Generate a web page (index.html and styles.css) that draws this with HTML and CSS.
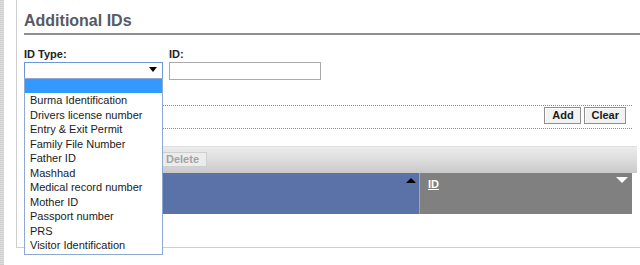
FILE: index.html
```html
<!DOCTYPE html>
<html>
<head>
<meta charset="utf-8">
<link rel="stylesheet" href="styles.css">
</head>
<body>
<div class="page">
  <div class="strip"></div>
  <div class="panel">
    <h2 class="title">Additional IDs</h2>
    <div class="form">
      <div class="fields">
        <div class="field field-type">
          <label class="label">ID Type:</label>
          <div class="select"><span class="select-arrow"></span></div>
          <ul class="dropdown">
            <li class="opt selected">&nbsp;</li>
            <li class="opt">Burma Identification</li>
            <li class="opt">Drivers license number</li>
            <li class="opt">Entry &amp; Exit Permit</li>
            <li class="opt">Family File Number</li>
            <li class="opt">Father ID</li>
            <li class="opt">Mashhad</li>
            <li class="opt">Medical record number</li>
            <li class="opt">Mother ID</li>
            <li class="opt">Passport number</li>
            <li class="opt">PRS</li>
            <li class="opt">Visitor Identification</li>
          </ul>
        </div>
        <div class="field">
          <label class="label">ID:</label>
          <input class="text" type="text">
        </div>
      </div>
      <div class="actions">
        <button class="btn">Add</button>
        <button class="btn">Clear</button>
      </div>
      <div class="toolbar">
        <button class="btn btn-disabled">Delete</button>
      </div>
      <div class="grid-head">
        <div class="col col-type"><span class="tri-up"></span></div>
        <div class="col col-id"><span class="col-label">ID</span><span class="tri-down"></span></div>
      </div>
    </div>
  </div>
</div>
</body>
</html>
```

FILE: styles.css
```css
* { box-sizing: border-box; }
html, body { margin: 0; padding: 0; background: #fff; }
body {
  font-family: "Liberation Sans", Arial, sans-serif;
  color: #222;
  width: 640px;
  height: 265px;
  overflow: hidden;
}
.page { display: flex; height: 265px; }
.strip {
  width: 4px;
  flex: none;
  background: repeating-linear-gradient(to bottom, #cfcfcf 0, #cfcfcf 1px, #dedede 1px, #dedede 2px);
}
.panel {
  margin-left: 12px;
  flex: 1;
  height: 248px;
  border-left: 1px solid #cfcfcf;
  border-bottom: 1px solid #cfcfcf;
  padding-left: 7px;
}
.title {
  margin: 11px 0 0 0;
  font-size: 16px;
  line-height: 20px;
  font-weight: bold;
  color: #555a66;
  padding-bottom: 2px;
  border-bottom: 2px solid #8f8f8f;
}
.form { width: 608px; }
.fields { display: flex; margin-top: 13px; }
.field { display: flex; flex-direction: column; }
.field-type { width: 145px; position: relative; }
.label {
  font-size: 11px;
  line-height: 13px;
  font-weight: bold;
  color: #222;
}
.select {
  margin-top: 1px;
  width: 139px;
  height: 17px;
  border: 1px solid #6d97d6;
  background: #fff;
  display: flex;
  justify-content: flex-end;
  align-items: flex-start;
  padding: 4px 5px 0 0;
}
.select-arrow {
  width: 0; height: 0;
  border-left: 4px solid transparent;
  border-right: 4px solid transparent;
  border-top: 5px solid #000;
}
.dropdown {
  position: absolute;
  left: 0;
  top: 30px;
  width: 139px;
  margin: 0;
  padding: 0 0 1px 0;
  list-style: none;
  background: #fff;
  border: 1px solid #8ea8d4;
  z-index: 5;
}
.opt {
  height: 14.5px;
  line-height: 14.5px;
  font-size: 11px;
  padding-left: 5px;
  color: #1a1a1a;
  white-space: nowrap;
}
.opt.selected { background: #3399ff; height: 14px; }
.text {
  margin: 1px 0 0 0;
  width: 152px;
  height: 18px;
  border: 1px solid #aaaaaa;
  padding: 0 2px;
  font-size: 11px;
}
.actions {
  margin-top: 25px;
  height: 24px;
  border-top: 1px dotted #8a8a8a;
  border-bottom: 1px dotted #8a8a8a;
  display: flex;
  justify-content: flex-end;
  align-items: flex-start;
  gap: 3px;
  padding: 1px 6px 0 0;
}
.btn {
  font-family: "Liberation Sans", Arial, sans-serif;
  font-size: 11px;
  font-weight: bold;
  color: #1a1a1a;
  height: 17px;
  line-height: 15px;
  padding: 0 6px;
  min-width: 37px;
  background: #f2f2f2;
  border: 1px solid #8f8f8f;
  box-shadow: inset 1px 1px 0 #fff;
  border-radius: 0;
  margin: 0;
}
.toolbar {
  margin-top: 17px;
  height: 27px;
  width: 613px;
  background: linear-gradient(to bottom, #ececec 0%, #dedede 45%, #c9c9c9 100%);
  border-top: 1px solid #e2e2e2;
  padding: 5px 0 0 134px;
  display: flex;
  align-items: flex-start;
}
.btn-disabled {
  color: #a3a3a3;
  height: 15px;
  line-height: 13px;
  min-width: 0;
  padding: 0 7px;
  background: #ececec;
  border: 1px solid #cfcfcf;
  box-shadow: none;
}
.grid-head { display: flex; height: 41px; }
.col { height: 41px; }
.col-type {
  width: 396px;
  background: #5b72a8;
  border-right: 1px solid #9aa6c0;
  display: flex;
  justify-content: flex-end;
  align-items: flex-start;
  padding: 5px 3px 0 0;
}
.tri-up {
  width: 0; height: 0;
  border-left: 5px solid transparent;
  border-right: 5px solid transparent;
  border-bottom: 5px solid #000;
}
.col-id {
  width: 212px;
  background: #808080;
  display: flex;
  justify-content: space-between;
  align-items: flex-start;
  padding: 5px 4px 0 8px;
}
.col-label {
  font-size: 11px;
  line-height: 13px;
  font-weight: bold;
  color: #fff;
  text-decoration: underline;
}
.tri-down {
  margin-top: -1px;
  width: 0; height: 0;
  border-left: 6px solid transparent;
  border-right: 6px solid transparent;
  border-top: 6px solid #fff;
}
```
